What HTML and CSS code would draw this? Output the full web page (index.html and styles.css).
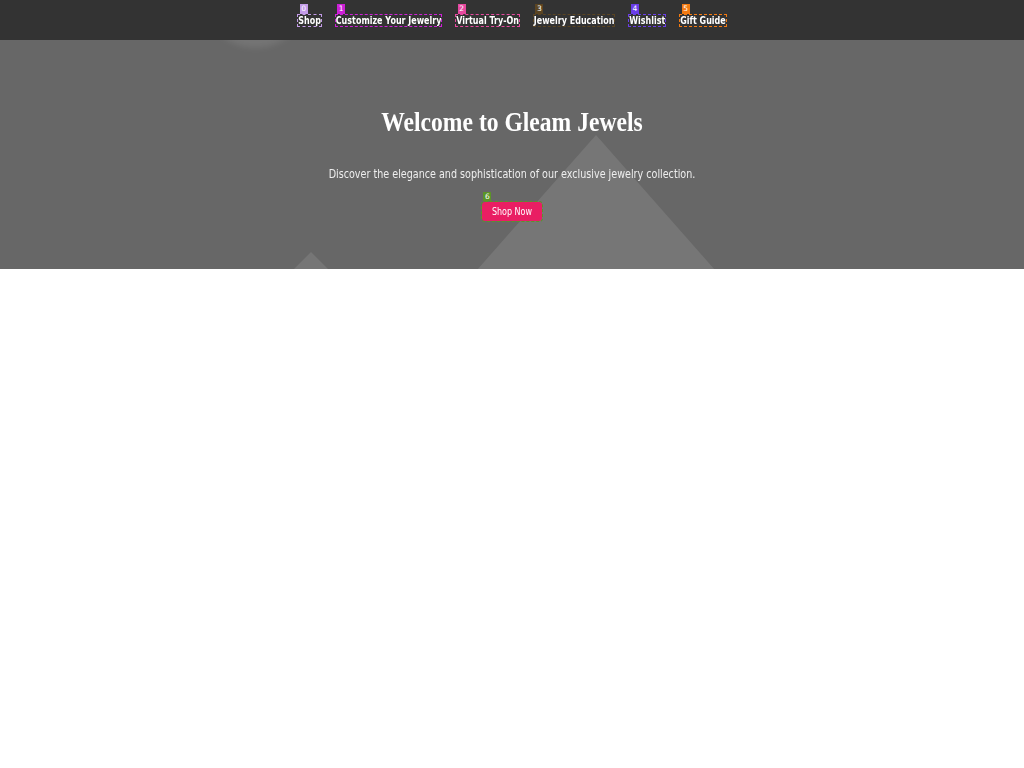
FILE: index.html
```html
<!DOCTYPE html>
<html lang="en">
<head>
<meta charset="utf-8">
<title>Gleam Jewels</title>
<link rel="stylesheet" href="styles.css">
</head>
<body>
  <nav class="topnav">
    <ul class="nav-list">
      <li><a class="nav-link mark-0" href="#"><span class="txt">Shop</span><span class="badge">0</span></a></li>
      <li><a class="nav-link mark-1" href="#"><span class="txt">Customize Your Jewelry</span><span class="badge">1</span></a></li>
      <li><a class="nav-link mark-2" href="#"><span class="txt">Virtual Try-On</span><span class="badge">2</span></a></li>
      <li><a class="nav-link mark-3" href="#"><span class="txt">Jewelry Education</span><span class="badge">3</span></a></li>
      <li><a class="nav-link mark-4" href="#"><span class="txt">Wishlist</span><span class="badge">4</span></a></li>
      <li><a class="nav-link mark-5" href="#"><span class="txt">Gift Guide</span><span class="badge">5</span></a></li>
    </ul>
  </nav>
  <section class="hero">
    <span class="shape circle"></span>
    <span class="shape tri tri-big"></span>
    <span class="shape tri tri-small"></span>
    <h1 class="hero-title"><span class="txt">Welcome to Gleam Jewels</span></h1>
    <p class="hero-sub"><span class="txt">Discover the elegance and sophistication of our exclusive jewelry collection.</span></p>
    <a class="btn mark-6" href="#"><span class="txt">Shop Now</span><span class="badge">6</span></a>
  </section>
</body>
</html>
```

FILE: styles.css
```css
html, body {
  margin: 0;
  padding: 0;
  background: #ffffff;
}

body {
  font-family: "DejaVu Sans", sans-serif;
}

/* glyphs in the reference are slightly tall for their width */
.txt {
  display: inline-block;
  transform: scaleY(1.2);
}

.topnav {
  height: 40px;
  background: #333333;
  display: flex;
  align-items: center;
  justify-content: center;
}

.nav-list {
  display: flex;
  gap: 14.8px;
  list-style: none;
  margin: 0;
  padding: 0;
}

.nav-list li {
  display: flex;
}

.nav-link {
  position: relative;
  display: inline-block;
  padding: 1px 0;
  color: #ffffff;
  font-weight: bold;
  font-size: 8px;
  line-height: normal;
  text-decoration: none;
  outline: 1px dashed var(--mark);
}

.badge {
  position: absolute;
  left: 1.5px;
  bottom: calc(100% + 1px);
  background: var(--mark);
  color: #ffffff;
  font-family: "DejaVu Sans", sans-serif;
  font-weight: normal;
  font-size: 7.5px;
  line-height: 9.2px;
  padding: 0 1.6px;
}

.mark-0 { --mark: #c39be8; }
.mark-1 { --mark: #cc1fd6; }
.mark-2 { --mark: #e6489f; }
.mark-3 { --mark: #5a4422; }
.mark-4 { --mark: #6a3de8; }
.mark-5 { --mark: #f27a12; }
.mark-6 { --mark: #5c9428; }

.hero {
  position: relative;
  overflow: hidden;
  box-sizing: border-box;
  height: 229px;
  padding-top: 68.4px;
  background: #676767;
  display: flex;
  flex-direction: column;
  align-items: center;
}

.shape {
  position: absolute;
  display: block;
}

.circle {
  left: 193px;
  top: -142px;
  width: 125px;
  height: 150px;
  border-radius: 50%;
  background: rgba(255, 255, 255, 0.09);
  filter: blur(3px);
}

.tri {
  width: 0;
  height: 0;
  border-style: solid;
  border-color: transparent transparent rgba(255, 255, 255, 0.1) transparent;
}

.tri-big {
  left: 477px;
  top: 95px;
  border-width: 0 119px 135px 119px;
}

.tri-small {
  left: 294px;
  top: 212px;
  border-width: 0 17px 17px 17px;
}

.hero-title {
  position: relative;
  margin: 0;
  font-family: "Liberation Serif", "Times New Roman", serif;
  font-weight: bold;
  font-size: 23.6px;
  line-height: normal;
  color: #ffffff;
}

.hero-sub {
  position: relative;
  margin: 32.9px 0 0;
  font-size: 9.6px;
  line-height: normal;
  color: #eeeeee;
}

.btn {
  position: relative;
  margin-top: 23.1px;
  padding: 4.6px 10px;
  background: #e91e63;
  border-radius: 3px;
  color: #ffffff;
  font-size: 8px;
  line-height: normal;
  text-decoration: none;
  outline: 1px dashed var(--mark);
}
```
